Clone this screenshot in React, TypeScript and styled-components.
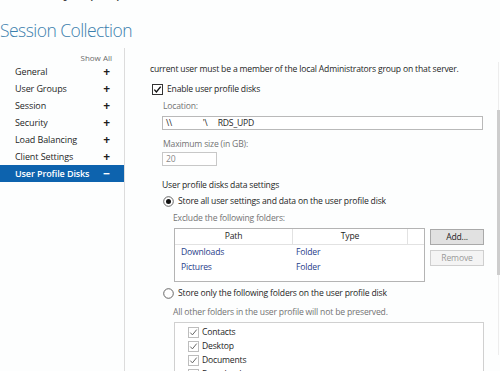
import React from "react";
import styled, { createGlobalStyle } from "styled-components";

const Global = createGlobalStyle`
  html, body { margin: 0; padding: 0; background: #ffffff; }
  body { font-family: "Open Sans", "Noto Sans", sans-serif; color: #1e1e1e; }
  * { box-sizing: border-box; }
`;

const Page = styled.div`
  width: 500px;
  height: 371px;
  overflow: hidden;
  display: flex;
  flex-direction: column;
  background: #fdfefe;
`;

const TopClip = styled.div`
  height: 5px;
  overflow: hidden;
  padding-left: 12px;
  display: flex;
  align-items: flex-start;
  white-space: nowrap;
`;

const TopText = styled.div`
  font-size: 16px;
  line-height: 16px;
  height: 16px;
  margin-top: -17px;
  flex: none;
  color: #444;
  word-spacing: 14px;
`;

const Title = styled.h1`
  margin: 12px 0 0 0;
  padding: 0;
  font-weight: 300;
  font-size: 17.5px;
  line-height: 26px;
  height: 31px;
  color: #3b80ad;
  letter-spacing: -0.55px;
  white-space: nowrap;
`;

const Body = styled.div`
  flex: 1;
  display: flex;
  min-height: 0;
`;

const Sidebar = styled.div`
  width: 125px;
  flex: none;
  border-right: 1px solid #dcdcdc;
  display: flex;
  flex-direction: column;
`;

const ShowAll = styled.div`
  font-size: 8px;
  line-height: 10px;
  color: #6a6a6a;
  text-align: right;
  padding: 5px 12px 0 0;
  height: 15px;
`;

const NavItem = styled.div<{ $active?: boolean }>`
  height: 17px;
  display: flex;
  align-items: center;
  justify-content: space-between;
  padding: 0 14px 0 15px;
  font-size: 9px;
  letter-spacing: -0.1px;
  color: ${(p) => (p.$active ? "#ffffff" : "#1e1e1e")};
  background: ${(p) => (p.$active ? "#0d63ae" : "transparent")};
  font-weight: ${(p) => (p.$active ? 600 : 400)};
  white-space: nowrap;
`;

const Sign = styled.span`
  font-weight: 700;
  font-size: 12px;
  line-height: 10px;
`;

const Content = styled.div`
  flex: 1;
  display: flex;
  flex-direction: column;
  padding-left: 25px;
  min-width: 0;
`;

const Line = styled.div<{ $mt: number; $indent?: number; $muted?: boolean }>`
  margin-top: ${(p) => p.$mt}px;
  margin-left: ${(p) => p.$indent ?? 0}px;
  height: 12px;
  font-size: 8.6px;
  letter-spacing: -0.18px;
  line-height: 12px;
  color: ${(p) => (p.$muted ? "#737373" : "#1e1e1e")};
  white-space: nowrap;
  display: flex;
  align-items: center;
  gap: 4px;
`;

const TextBox = styled.div<{ $mt: number; $w: number }>`
  margin-top: ${(p) => p.$mt}px;
  margin-left: 12px;
  width: ${(p) => p.$w}px;
  height: 14px;
  border: 1px solid #b9b9b9;
  background: #fff;
  font-size: 8.6px;
  letter-spacing: -0.18px;
  line-height: 12px;
  padding-left: 3px;
  color: #1e1e1e;
  white-space: pre;
`;

const MutedBox = styled(TextBox)`
  color: #8a8a8a;
  border-color: #c8c8c8;
`;

const Row = styled.div<{ $mt: number }>`
  margin-top: ${(p) => p.$mt}px;
  margin-left: 24px;
  display: flex;
  gap: 5px;
  align-items: flex-start;
`;

const Table = styled.div`
  width: 251px;
  height: 54px;
  border: 1px solid #b4b4b4;
  background: #fff;
  display: flex;
  flex-direction: column;
`;

const THead = styled.div`
  height: 16px;
  display: grid;
  grid-template-columns: 118px 115px 1fr;
  border-bottom: 1px solid #e2e2e2;
`;

const Th = styled.div`
  font-size: 8.6px;
  letter-spacing: -0.18px;
  line-height: 15px;
  text-align: center;
  border-right: 1px solid #e2e2e2;
  color: #1e1e1e;
`;

const Tr = styled.div`
  height: 15px;
  display: grid;
  grid-template-columns: 115px 1fr;
  padding-left: 6px;
  font-size: 8.6px;
  letter-spacing: -0.18px;
  line-height: 15px;
  color: #28408a;
`;

const Buttons = styled.div`
  display: flex;
  flex-direction: column;
  gap: 5px;
  padding-top: 1px;
`;

const Button = styled.div<{ $disabled?: boolean }>`
  width: 54px;
  height: 16px;
  border: 1px solid ${(p) => (p.$disabled ? "#cfcfcf" : "#a9a9a9")};
  background: ${(p) => (p.$disabled ? "#f4f4f4" : "#e1e1e1")};
  color: ${(p) => (p.$disabled ? "#9a9a9a" : "#1e1e1e")};
  font-size: 8.6px;
  letter-spacing: -0.18px;
  line-height: 14px;
  text-align: center;
`;

const FolderList = styled.div`
  margin-top: 4px;
  margin-left: 24px;
  width: 310px;
  height: 70px;
  border: 1px solid #d0d0d0;
  border-bottom: none;
  background: #fff;
  padding: 2px 0 0 13px;
`;

const FolderItem = styled.div`
  height: 14px;
  display: flex;
  align-items: center;
  gap: 3px;
  font-size: 8.6px;
  letter-spacing: -0.18px;
  color: #1e1e1e;
`;

const Scroll = styled.div`
  width: 4px;
  flex: none;
  margin-left: 12px;
  display: flex;
  flex-direction: column;
  padding-top: 14px;
`;

const Track = styled.div<{ $h: number; $dark?: boolean }>`
  height: ${(p) => p.$h}px;
  width: ${(p) => (p.$dark ? 3 : 1)}px;
  margin-left: ${(p) => (p.$dark ? 1 : 2)}px;
  background: ${(p) => (p.$dark ? "#cdcdcd" : "#ededed")};
`;

const CheckBox = ({ light }: { light?: boolean }) => (
  <svg width="11" height="11" viewBox="0 0 11 11" style={{ flex: "none" }}>
    <rect x="0.5" y="0.5" width="10" height="10" fill="#fff" stroke={light ? "#bdbdbd" : "#333"} />
    <path d="M2.3 5.6 L4.4 7.9 L8.7 2.6" fill="none" stroke={light ? "#666" : "#111"} strokeWidth={light ? 1 : 1.4} />
  </svg>
);

const Radio = ({ on }: { on?: boolean }) => (
  <svg width="11" height="11" viewBox="0 0 11 11" style={{ flex: "none" }}>
    <circle cx="5.5" cy="5.5" r="4.8" fill="#fff" stroke="#555" strokeWidth="0.9" />
    {on && <circle cx="5.5" cy="5.5" r="2.5" fill="#111" />}
  </svg>
);

const nav = ["General", "User Groups", "Session", "Security", "Load Balancing", "Client Settings"];

export default function App() {
  return (
    <Page>
      <Global />
      <TopClip>
        <TopText>Security properties</TopText>
      </TopClip>
      <Title>Session Collection</Title>
      <Body>
        <Sidebar>
          <ShowAll>Show All</ShowAll>
          {nav.map((n) => (
            <NavItem key={n}>
              <span>{n}</span>
              <Sign>+</Sign>
            </NavItem>
          ))}
          <NavItem $active>
            <span>User Profile Disks</span>
            <Sign>−</Sign>
          </NavItem>
        </Sidebar>
        <Content>
          <Line $mt={15}>current user must be a member of the local Administrators group on that server.</Line>
          <Line $mt={8} $indent={2}>
            <CheckBox />
            <span>Enable user profile disks</span>
          </Line>
          <Line $mt={5} $indent={13} $muted>Location:</Line>
          <TextBox $mt={4} $w={321}>{"\\\\               '\\     RDS_UPD"}</TextBox>
          <Line $mt={8} $indent={13} $muted>Maximum size (in GB):</Line>
          <MutedBox $mt={2} $w={55}>20</MutedBox>
          <Line $mt={13} $indent={12}>User profile disks data settings</Line>
          <Line $mt={4} $indent={13}>
            <Radio on />
            <span>Store all user settings and data on the user profile disk</span>
          </Line>
          <Line $mt={5} $indent={23} $muted>Exclude the following folders:</Line>
          <Row $mt={4}>
            <Table>
              <THead>
                <Th>Path</Th>
                <Th>Type</Th>
                <span />
              </THead>
              <Tr>
                <span>Downloads</span>
                <span>Folder</span>
              </Tr>
              <Tr>
                <span>Pictures</span>
                <span>Folder</span>
              </Tr>
            </Table>
            <Buttons>
              <Button>Add...</Button>
              <Button $disabled>Remove</Button>
            </Buttons>
          </Row>
          <Line $mt={5} $indent={13}>
            <Radio />
            <span>Store only the following folders on the user profile disk</span>
          </Line>
          <Line $mt={7} $indent={23} $muted>All other folders in the user profile will not be preserved.</Line>
          <FolderList>
            {["Contacts", "Desktop", "Documents", "Downloads"].map((f) => (
              <FolderItem key={f}>
                <CheckBox light />
                <span>{f}</span>
              </FolderItem>
            ))}
          </FolderList>
        </Content>
        <Scroll>
          <Track $h={48} />
          <Track $h={165} $dark />
          <Track $h={80} />
        </Scroll>
      </Body>
    </Page>
  );
}
